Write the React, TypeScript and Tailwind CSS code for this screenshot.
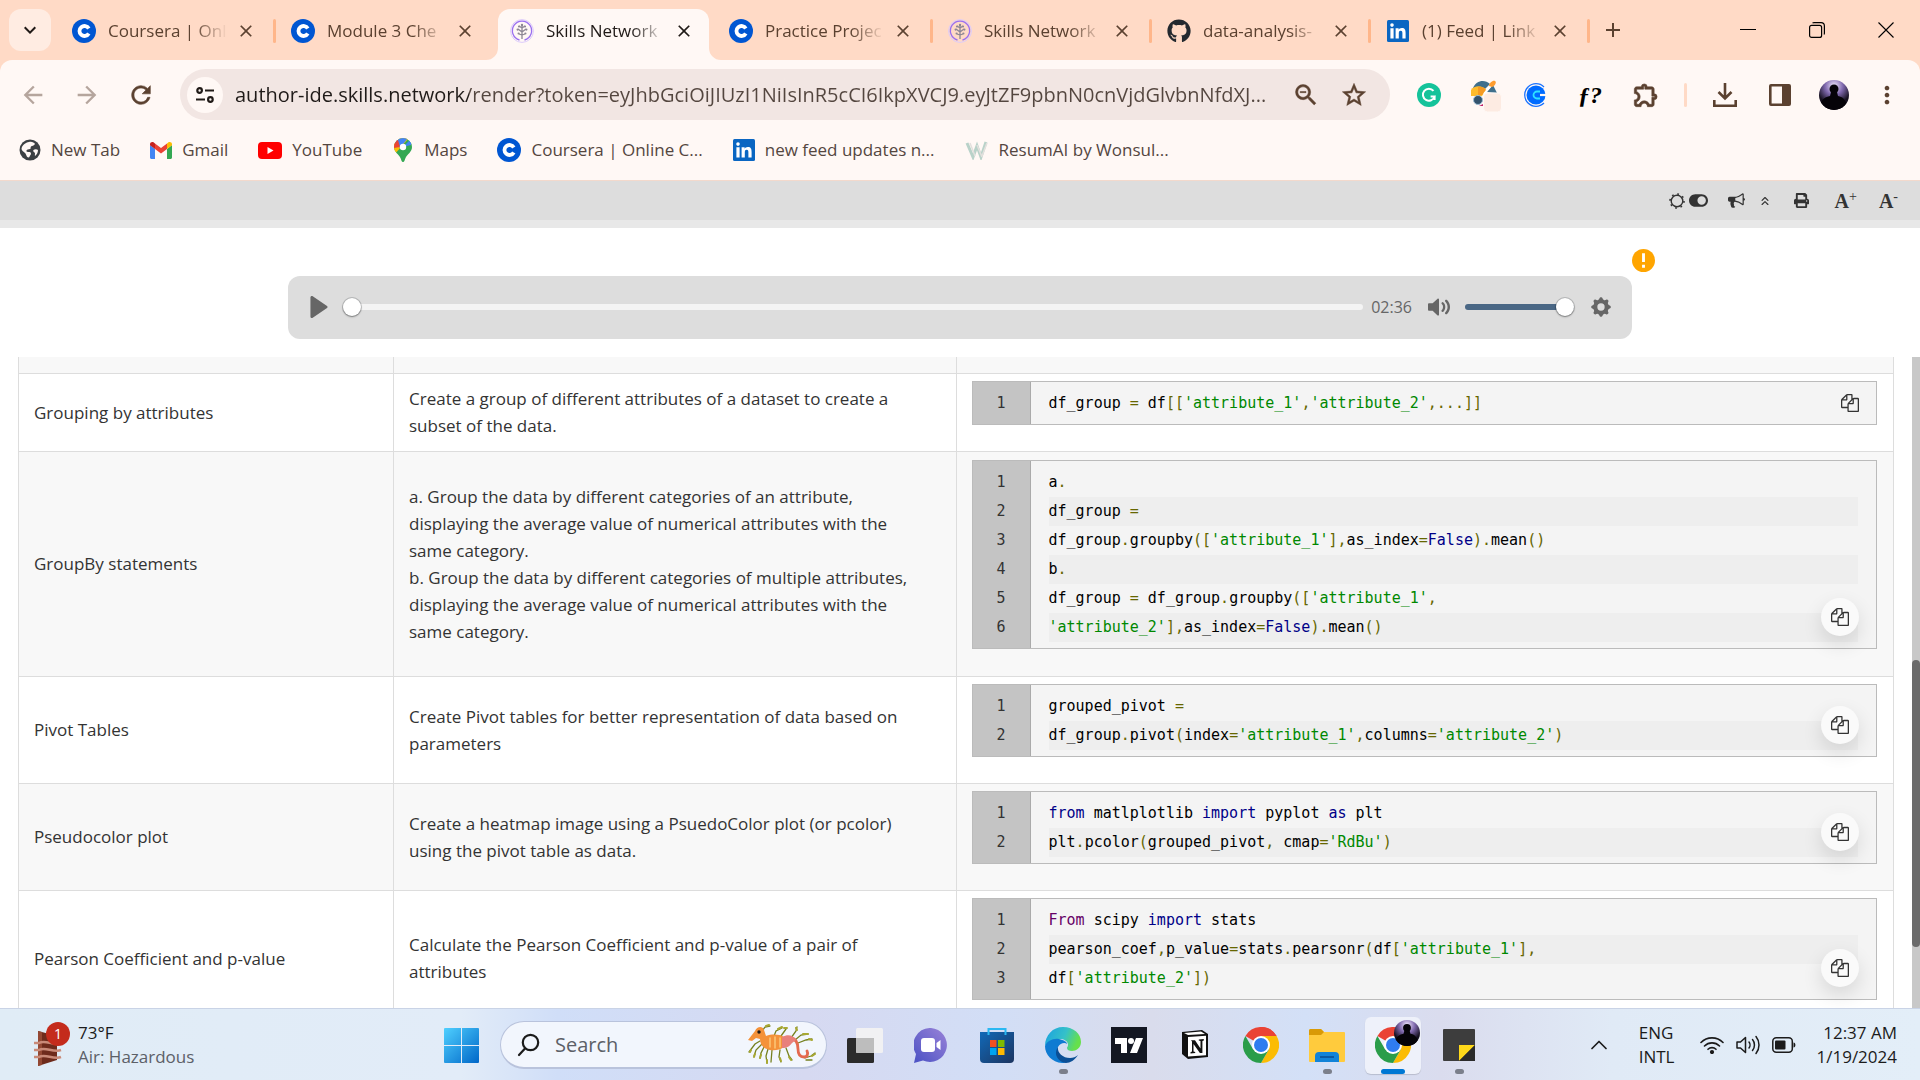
import React, { useState } from "react";
import {
  MdArrowBack,
  MdArrowForward,
  MdRefresh,
  MdStarBorder,
  MdOutlineExtension,
  MdZoomOut,
  MdMoreVert,
  MdKeyboardArrowDown,
  MdClose,
  MdAdd,
} from "react-icons/md";
import { FaGithub, FaPrint, FaToggleOn } from "react-icons/fa";
import { ChevronUp, ChevronsUp } from "lucide-react";

/* ---------- brand marks ---------- */

function CourseraMark() {
  return (
    <svg viewBox="0 0 24 24" className="size-6 shrink-0">
      <circle cx="12" cy="12" r="12" fill="#0056d2" />
      <path d="M16.800 9.500A5 5 0 1 0 16.800 14.500" fill="none" stroke="#fff" strokeWidth="3.800" />
    </svg>
  );
}

function SkillsMark() {
  return (
    <svg viewBox="0 0 24 24" className="size-6 shrink-0" fill="none">
      <circle cx="12" cy="12" r="11.400" stroke="#dccbfb" strokeWidth="1" />
      <path d="M9.500 21A9.600 9.600 0 1 1 14.500 21" stroke="#9a6ff0" strokeWidth="1.300" />
      <g stroke="#8d8794" strokeWidth="1.300">
        <path d="M12 20V5M12 9l-3-2M12 9l3-2M12 13l-4-3M12 13l4-3M12 16l-3-1M12 16l3-1" />
      </g>
      <g fill="#8d8794">
        <circle cx="12" cy="6" r="1.200" />
        <circle cx="9" cy="7.500" r="1.100" />
        <circle cx="15" cy="7.500" r="1.100" />
        <circle cx="7.600" cy="10.600" r="1.100" />
        <circle cx="16.400" cy="10.600" r="1.100" />
        <circle cx="8.600" cy="14.500" r="1.100" />
        <circle cx="15.400" cy="14.500" r="1.100" />
      </g>
    </svg>
  );
}

function LinkedInMark() {
  return (
    <svg viewBox="0 0 22 22" className="size-[22px] shrink-0">
      <rect width="22" height="22" rx="1.500" fill="#0a66c2" />
      <path d="M3.400 8.300h3.200v10.200H3.400zM8.600 8.300h3v1.400c.5-.9 1.600-1.700 3.200-1.700 3.200 0 3.800 2.100 3.800 4.900v5.600h-3.200v-5c0-1.200 0-2.700-1.700-2.700s-1.900 1.300-1.900 2.600v5.100H8.600z" fill="#fff" />
      <circle cx="5" cy="5.100" r="1.800" fill="#fff" />
    </svg>
  );
}

function GlobeMark() {
  return (
    <svg viewBox="0 0 22 22" className="size-[22px] shrink-0">
      <circle cx="11" cy="11" r="10.500" fill="#3c4043" />
      <path d="M10 3c3-.6 5 .6 6 2-1 2-3 1.500-4 2.500s.5 2-1 2.500-3 0-3.500 1.500 1.500 1.500 3 1.500 2 2 1 3-1 2.500-2 2.500c-2 0-2-3-3.500-4.500C4.500 12.500 3 12 2.500 10 3 6 6.500 3.500 10 3zM14.500 11c1-1 3.500-1 4.500 0 0 3-1.500 5-3 6-.5-1.500.5-2-.3-3.200S13.500 12.500 14.500 11z" fill="#fff8f5" />
    </svg>
  );
}

function GmailMark() {
  return (
    <svg viewBox="0 0 22 17" className="h-[17px] w-[22px] shrink-0">
      <path d="M0 3v12.500C0 16.300.7 17 1.500 17H5V7z" fill="#4285f4" />
      <path d="M22 3v12.500c0 .8-.7 1.500-1.500 1.500H17V7z" fill="#34a853" />
      <path d="M17 1.500V7l5-3.700V2.500c0-2.200-2.300-3-3.800-1.900z" fill="#fbbc04" />
      <path d="M5 7V1.500l6 4.500 6-4.500V7l-6 4.500z" fill="#ea4335" />
      <path d="M0 2.500v.8L5 7V1.500L3.800.6C2.300-.5 0 .3 0 2.500z" fill="#c5221f" />
    </svg>
  );
}

function YouTubeMark() {
  return (
    <svg viewBox="0 0 24 17" className="h-[17px] w-6 shrink-0">
      <rect width="24" height="17" rx="4" fill="#f00" />
      <path d="M9.500 5v7l6-3.500z" fill="#fff" />
    </svg>
  );
}

function MapsMark() {
  return (
    <svg viewBox="-2 0 22 24" className="h-6 w-[22px] shrink-0">
      <defs>
        <clipPath id="pin">
          <path d="M9 0a9 9 0 0 0-9 9c0 5 4.500 7 6.500 11 .9 1.800 1 4 2.500 4s1.600-2.200 2.500-4C13.500 16 18 14 18 9a9 9 0 0 0-9-9z" />
        </clipPath>
      </defs>
      <g clipPath="url(#pin)">
        <rect width="18" height="24" fill="#34a853" />
        <path d="M0 17 15 0H0z" fill="#fbbc04" />
        <path d="M0 4l6 6 8-10H0z" fill="#4285f4" />
        <path d="M0 3v7l6-1L4 2z" fill="#ea4335" />
        <path d="M9 9l8-8v6z" fill="#4285f4" />
        <circle cx="9" cy="9" r="3.200" fill="#fff" />
      </g>
    </svg>
  );
}

function ResumeMark() {
  return (
    <svg viewBox="0 0 24 20" className="h-5 w-6 shrink-0" fill="none">
      <path d="M2 3l6 14 4-11 4 11 5-15" stroke="#b9d2c9" strokeWidth="3" />
      <path d="M5 3l5 13M12 5l5 12M22 3l-5 13" stroke="#e3e0dd" strokeWidth="1.500" />
    </svg>
  );
}

function Avatar({ id, className }: { id: string; className: string }) {
  return (
    <svg viewBox="0 0 30 30" className={className}>
      <defs>
        <radialGradient id={id} cx="50%" cy="20%" r="60%">
          <stop offset="0" stopColor="#f3eaff" />
          <stop offset=".5" stopColor="#7f68ad" />
          <stop offset="1" stopColor="#15101f" />
        </radialGradient>
        <clipPath id={id + "c"}>
          <circle cx="15" cy="15" r="15" />
        </clipPath>
      </defs>
      <g clipPath={"url(#" + id + "c)"}>
        <rect width="30" height="30" fill={"url(#" + id + ")"} />
        <circle cx="15" cy="9" r="4.500" fill="#050308" />
        <path d="M12 12h6l1 4c5 1 6 3 8 6l3 9H0l2-9c2-3 4-5 9-6z" fill="#050308" />
      </g>
    </svg>
  );
}

/* ---------- browser chrome ---------- */

type Tab = { title: string; icon: React.ReactNode; active?: boolean; sep?: boolean };

const TABS: Tab[] = [
  { title: "Coursera | Onl", icon: <CourseraMark />, sep: true },
  { title: "Module 3 Che", icon: <CourseraMark /> },
  { title: "Skills Network", icon: <SkillsMark />, active: true },
  { title: "Practice Projec", icon: <CourseraMark />, sep: true },
  { title: "Skills Network", icon: <SkillsMark />, sep: true },
  { title: "data-analysis-", icon: <FaGithub className="size-6 shrink-0 text-[#24292f]" />, sep: true },
  { title: "(1) Feed | Link", icon: <LinkedInMark />, sep: true },
];

function TabStrip() {
  return (
    <header className="flex h-[60px] shrink-0 items-stretch bg-[#ffdac6] pl-[9px] text-[#5b4130]">
      <button aria-label="Search tabs" className="my-[9px] mr-2 flex size-[42px] items-center justify-center rounded-xl bg-[#ffece2] text-[#201a17]">
        <MdKeyboardArrowDown className="size-6" />
      </button>
      <nav className="flex min-w-0">
        {TABS.map((t, i) => (
          <div key={i} className="relative flex w-[219px] min-w-0 items-stretch">
            {t.active && (
              <>
                <div className="absolute top-[9px] right-[7px] bottom-0 left-px rounded-t-xl bg-[#fff8f5]" />
                <svg viewBox="0 0 12 12" className="absolute bottom-0 -left-[11px] size-3 text-[#fff8f5]" fill="currentColor"><path d="M12 0v12H0A12 12 0 0 0 12 0z" /></svg>
                <svg viewBox="0 0 12 12" className="absolute -right-[5px] bottom-0 size-3 text-[#fff8f5]" fill="currentColor"><path d="M0 0v12h12A12 12 0 0 1 0 0z" /></svg>
              </>
            )}
            <div className={"relative flex min-w-0 flex-1 items-center pt-0.5 pl-[13px] " + (t.active ? "text-[#201a17]" : "")}>
              <button className="flex min-w-0 shrink-0 items-center gap-3">
                <span className="flex w-6 shrink-0 justify-center">{t.icon}</span>
                <span className="w-[122px] text-left text-[17px] leading-6 whitespace-nowrap [mask-image:linear-gradient(90deg,#000_70%,transparent_98%)]">{t.title}</span>
              </button>
              <button aria-label="Close tab" className="ml-1 flex size-6 items-center justify-center">
                <MdClose className="size-5 shrink-0" />
              </button>
            </div>
            {t.sep && <div className="absolute top-[19px] right-0.5 h-6 w-[3px] rounded bg-[#ffb68a]" />}
          </div>
        ))}
      </nav>
      <button aria-label="New tab" className="ml-[5px] flex w-8 items-center justify-center"><MdAdd className="size-6" /></button>
      <div className="ml-auto flex text-black">
        <button aria-label="Minimize" className="flex w-[69px] items-center justify-center">
          <svg viewBox="0 0 16 16" className="size-4" fill="none" stroke="currentColor"><path d="M0 7.500h16" /></svg>
        </button>
        <button aria-label="Restore" className="flex w-[69px] items-center justify-center">
          <svg viewBox="0 0 16 16" className="size-4" fill="none" stroke="currentColor" strokeWidth="1.200"><rect x=".6" y="3.400" width="12" height="12" rx="2" /><path d="M3.500 1c.5-.3 1-.4 1.500-.4h7A3.400 3.400 0 0 1 15.400 4v7c0 .6-.1 1-.4 1.500" /></svg>
        </button>
        <button aria-label="Close" className="flex w-[69px] items-center justify-center">
          <svg viewBox="0 0 16 16" className="size-4" fill="none" stroke="currentColor" strokeWidth="1.100"><path d="M.5.5l15 15M15.500.5l-15 15" /></svg>
        </button>
      </div>
    </header>
  );
}

const URL_TEXT =
  "author-ide.skills.network/render?token=eyJhbGciOiJIUzI1NiIsInR5cCI6IkpXVCJ9.eyJtZF9pbnN0cnVjdGlvbnNfdXJ...";

const BOLD_ICON = "size-7 stroke-current [&>path[fill=none]]:hidden";

function Toolbar() {
  return (
    <div className="flex h-[69px] items-center rounded-t-xl bg-[#fff8f5] pr-[19px] pl-[19px] text-[#5b4130]">
      <button aria-label="Back" className="mr-[26px] text-[#b5a59d]"><MdArrowBack className="size-7" /></button>
      <button aria-label="Forward" className="mr-[26px] text-[#b5a59d]"><MdArrowForward className="size-7" /></button>
      <button aria-label="Reload" className="mr-[25px]"><MdRefresh className={BOLD_ICON} strokeWidth={0.5} /></button>
      <div className="flex h-[51px] min-w-0 flex-1 items-center rounded-full bg-[#f2e6e3] pr-[22px] pl-[7px]">
        <button aria-label="Site information" className="mr-3 flex size-9 shrink-0 items-center justify-center rounded-full bg-[#fff8f5]">
          <svg viewBox="0 0 18 18" className="size-[18px]" fill="none" stroke="#201a17" strokeWidth="2.200"><circle cx="3.600" cy="4.500" r="2.300" /><path d="M9 4.500h9M0 13.500h9" /><circle cx="14.400" cy="13.500" r="2.300" /></svg>
        </button>
        <input aria-label="Address" defaultValue={URL_TEXT} className="min-w-0 flex-1 bg-transparent bg-[linear-gradient(90deg,#1f1a18_234px,#54463f_234px)] bg-clip-text text-xl leading-8 text-transparent outline-none" />
        <button aria-label="Zoom" className="ml-2"><MdZoomOut className={BOLD_ICON} strokeWidth={0.4} /></button>
        <button aria-label="Bookmark" className="ml-5"><MdStarBorder className={BOLD_ICON} strokeWidth={0.4} /></button>
      </div>
      <div className="ml-[25px] flex items-center">
        <button aria-label="Grammar" className="w-[55px]">
          <svg viewBox="0 0 24 24" className="ml-0.5 size-6"><circle cx="12" cy="12" r="12" fill="#15c39a" /><path d="M16.500 7.800A6 6 0 1 0 17.600 13.500h-4M17.600 12.500v4.500" fill="none" stroke="#fff" strokeWidth="2" /></svg>
        </button>
        <button aria-label="Painter" className="w-[54px]">
          <svg viewBox="0 0 32 36" className="h-9 w-8">
            <path d="M3 11C6 3 15 2 20 7l-5 5z" fill="#3f6f8c" />
            <path d="M1 13c3-5 12-5 15 0l-4 6H1z" fill="#fdbb2d" />
            <path d="M8 10c3-1 6 0 8 3l-4 5H8z" fill="#f59a23" />
            <path d="M17 15l6-7 4 8z" fill="#3f6f8c" />
            <path d="M14 17l8-10" stroke="#fff" strokeWidth="2" />
            <path d="M19 9c0-3 4-6 6-5s0 5-3 6z" fill="#ff9d2f" />
            <circle cx="8" cy="23" r="4.500" fill="#33536d" stroke="#9dbcd3" />
            <path d="M9 29l4-2v2z" fill="#c2246b" />
            <rect x="13.500" y="16" width="18" height="19" rx="4" fill="#fdebe2" stroke="#fff8f5" />
          </svg>
        </button>
        <button aria-label="Clockify" className="w-[54px]">
          <svg viewBox="0 0 24 24" className="size-6" fill="none"><circle cx="12" cy="12" r="9.500" fill="#006bff" /><path d="M20 4A11.300 11.300 0 1 0 20 20" stroke="#1a73ff" strokeWidth="1.300" /><path d="M16 8.500h-3a3.500 3.500 0 0 0 0 7h3" stroke="#2de3ff" strokeWidth="1.800" /><path d="M16 12h8" stroke="#fff8f5" strokeWidth="2.200" /></svg>
        </button>
        <button aria-label="Font finder" className="w-[54px] text-left font-['Liberation_Serif'] text-2xl leading-7 font-bold text-black italic">ƒ?</button>
        <button aria-label="Extensions" className="w-[52px]"><MdOutlineExtension className={BOLD_ICON} strokeWidth={0.5} /></button>
        <div className="mr-[26px] h-6 w-[3px] rounded bg-[#ffdac6]" />
        <button aria-label="Downloads" className="w-14">
          <svg viewBox="0 0 24 24" className="size-6" fill="none" stroke="currentColor" strokeWidth="2.600"><path d="M12 0v15M5.500 9l6.500 6.500L18.500 9M1.300 17v5.700h21.400V17" /></svg>
        </button>
        <button aria-label="Side panel" className="w-[50px]">
          <svg viewBox="0 0 22 22" className="size-[22px]"><path fillRule="evenodd" d="M2 0h18a2 2 0 0 1 2 2v18a2 2 0 0 1-2 2H2a2 2 0 0 1-2-2V2a2 2 0 0 1 2-2zm.600 2.600v16.800H13V2.600z" fill="currentColor" /></svg>
        </button>
        <button aria-label="Profile"><Avatar id="p1" className="size-[30px]" /></button>
        <button aria-label="Menu" className="ml-6"><MdMoreVert className="size-7" /></button>
      </div>
    </div>
  );
}

function Bookmark({ icon, label }: { icon: React.ReactNode; label: string }) {
  return (
    <a href="#" className="flex items-center gap-2.5 text-[17px] leading-6 whitespace-nowrap text-[#54463f]">
      {icon}
      {label}
    </a>
  );
}

/* ---------- page content ---------- */

type Tok = [string, string?];
const K = "text-[#000088]";
const S = "text-[#008800]";
const P = "text-[#666600]";
const T = "text-[#660066]";

type Row = { name: string; desc: string[]; tall?: boolean; code: Tok[][] };

const ROWS: Row[] = [
  {
    name: "Grouping by attributes",
    desc: ["Create a group of different attributes of a dataset to create a subset of the data."],
    code: [[["df_group "], ["=", P], [" df"], ["[[", P], ["'attribute_1'", S], [",", P], ["'attribute_2'", S], [",...]]", P]]],
  },
  {
    name: "GroupBy statements",
    tall: true,
    desc: [
      "a. Group the data by different categories of an attribute, displaying the average value of numerical attributes with the same category.",
      "b. Group the data by different categories of multiple attributes, displaying the average value of numerical attributes with the same category.",
    ],
    code: [
      [["a"], [".", P]],
      [["df_group "], ["=", P]],
      [["df_group"], [".", P], ["groupby"], ["([", P], ["'attribute_1'", S], ["],", P], ["as_index"], ["=", P], ["False", K], [").", P], ["mean"], ["()", P]],
      [["b"], [".", P]],
      [["df_group "], ["=", P], [" df_group"], [".", P], ["groupby"], ["([", P], ["'attribute_1'", S], [",", P]],
      [["'attribute_2'", S], ["],", P], ["as_index"], ["=", P], ["False", K], [").", P], ["mean"], ["()", P]],
    ],
  },
  {
    name: "Pivot Tables",
    desc: ["Create Pivot tables for better representation of data based on parameters"],
    code: [
      [["grouped_pivot "], ["=", P]],
      [["df_group"], [".", P], ["pivot"], ["(", P], ["index"], ["=", P], ["'attribute_1'", S], [",", P], ["columns"], ["=", P], ["'attribute_2'", S], [")", P]],
    ],
  },
  {
    name: "Pseudocolor plot",
    desc: ["Create a heatmap image using a PsuedoColor plot (or pcolor) using the pivot table as data."],
    code: [
      [["from", K], [" matlplotlib "], ["import", K], [" pyplot "], ["as", K], [" plt"]],
      [["plt"], [".", P], ["pcolor"], ["(", P], ["grouped_pivot"], [",", P], [" cmap"], ["=", P], ["'RdBu'", S], [")", P]],
    ],
  },
  {
    name: "Pearson Coefficient and p-value",
    desc: ["Calculate the Pearson Coefficient and p-value of a pair of attributes"],
    code: [
      [["From", T], [" scipy "], ["import", K], [" stats"]],
      [["pearson_coef"], [",", P], ["p_value"], ["=", P], ["stats"], [".", P], ["pearsonr"], ["(", P], ["df"], ["[", P], ["'attribute_1'", S], ["],", P]],
      [["df"], ["[", P], ["'attribute_2'", S], ["])", P]],
    ],
  },
];

function CopyIcon() {
  return (
    <svg viewBox="0 0 1792 1792" className="size-[18px]" fill="currentColor">
      <path d="M1696 384q40 0 68 28t28 68v1216q0 40-28 68t-68 28h-960q-40 0-68-28t-28-68v-288h-544q-40 0-68-28t-28-68v-672q0-40 20-88t48-76l408-408q28-28 76-48t88-20h416q40 0 68 28t28 68v328q68-40 128-40h416zm-544 213l-299 299h299v-299zm-640-384l-299 299h299v-299zm196 647l316-316v-416h-384v416q0 40-28 68t-68 28h-416v640h512v-256q0-40 20-88t48-76zm956 804v-1152h-384v416q0 40-28 68t-68 28h-416v640h896z" />
    </svg>
  );
}

function CodeBox({ code }: { code: Tok[][] }) {
  const single = code.length === 1;
  return (
    <div className="relative flex border border-[#bbb] bg-[#f4f4f4] font-['DejaVu_Sans_Mono',monospace] text-[15px] leading-[29px] text-black">
      <ol className="w-[58px] shrink-0 border-r border-[#aaa] bg-[#c4c4c4] pt-[7px] pb-1.5 text-center text-[#333]">
        {code.map((_, i) => (
          <li key={i}>{i + 1}</li>
        ))}
      </ol>
      <div className="min-w-0 flex-1 px-[18px] pt-[7px] pb-1.5">
        {code.map((line, i) => (
          <div key={i} className="whitespace-pre even:bg-[#eee]">
            {line.map(([t, c], j) => (
              <span key={j} className={c}>{t}</span>
            ))}
          </div>
        ))}
      </div>
      {single ? (
        <button aria-label="Copy code" className="absolute top-2.5 right-[15px] p-0.5 text-[#333]"><CopyIcon /></button>
      ) : (
        <button aria-label="Copy code" className="absolute right-[17px] bottom-3 flex size-[38px] items-center justify-center rounded-full bg-[#fafafa] text-[#333] shadow-[0_8px_20px_rgba(0,0,0,0.12)]">
          <CopyIcon />
        </button>
      )}
    </div>
  );
}

const RANGE =
  "h-[18px] appearance-none bg-transparent [&::-webkit-slider-runnable-track]:h-1.5 [&::-webkit-slider-runnable-track]:rounded-full [&::-webkit-slider-thumb]:-mt-1.5 [&::-webkit-slider-thumb]:size-[18px] [&::-webkit-slider-thumb]:appearance-none [&::-webkit-slider-thumb]:rounded-full [&::-webkit-slider-thumb]:bg-white [&::-webkit-slider-thumb]:shadow-[0_1px_2px_rgba(0,0,0,0.35),0_0_0_1px_rgba(35,40,47,0.2)]";

function Player() {
  const [pos, setPos] = useState(0);
  const [vol, setVol] = useState(100);
  return (
    <div className="mx-auto flex h-[63px] w-[70%] items-center rounded-xl bg-[#ddd] pr-5 pb-px pl-5 text-[#666]">
      <button aria-label="Play" className="mr-[13px]">
        <svg viewBox="0 0 18 18" className="size-[22px]" fill="currentColor"><path d="M15.562 8.100L3.870.225c-.818-.562-1.870 0-1.870.9v15.750c0 .9 1.052 1.462 1.870.9L15.563 9.900c.584-.450.584-1.350 0-1.800z" /></svg>
      </button>
      <input type="range" aria-label="Seek" value={pos} onChange={(e) => setPos(+e.target.value)} className={RANGE + " min-w-0 flex-1 [&::-webkit-slider-runnable-track]:bg-[#f4f4f4]"} />
      <span className="ml-2 text-base leading-6">02:36</span>
      <button aria-label="Mute" className="ml-4">
        <svg viewBox="0 0 18 18" className="size-[22px]" fill="currentColor">
          <path d="M15.600 3.300c-.4-.4-1-.4-1.400 0-.4.4-.4 1 0 1.400C15.400 5.900 16 7.400 16 9c0 1.600-.6 3.100-1.800 4.300-.4.4-.4 1 0 1.400.2.2.5.3.7.3.3 0 .5-.1.7-.3C17.100 13.200 18 11.200 18 9s-.9-4.200-2.400-5.700z" />
          <path d="M11.282 5.282a.909.909 0 000 1.316c.735.735.995 1.458.995 2.402 0 .936-.425 1.917-.995 2.487a.909.909 0 000 1.316c.145.145.636.262 1.018.156a.725.725 0 00.298-.156C13.773 11.733 14.130 10.160 14.130 9c0-.17-.002-.34-.011-.51-.053-.992-.319-2.005-1.522-3.208a.909.909 0 00-1.316 0zM3.786 6.008H.714C.286 6.008 0 6.310 0 6.760v4.512c0 .452.286.752.714.752h3.072l4.071 3.858c.5.3 1.143 0 1.143-.602V2.752c0-.601-.643-.977-1.143-.601L3.786 6.008z" />
        </svg>
      </button>
      <input type="range" aria-label="Volume" value={vol} onChange={(e) => setVol(+e.target.value)} className={RANGE + " ml-[15px] w-[109px] [&::-webkit-slider-runnable-track]:bg-[#4a6785]"} />
      <button aria-label="Settings" className="ml-4">
        <svg viewBox="0 0 18 18" className="size-[22px]" fill="currentColor"><path d="M16.135 7.784a2 2 0 01-1.230-2.969c.322-.536.225-.998-.094-1.316l-.31-.31c-.318-.318-.78-.415-1.316-.094a2 2 0 01-2.969-1.230C10.065 1.258 9.669 1 9.219 1h-.438c-.45 0-.845.258-.997.865a2 2 0 01-2.969 1.230c-.536-.322-.999-.225-1.317.093l-.31.31c-.318.318-.415.781-.093 1.317a2 2 0 01-1.230 2.969C1.260 7.935 1 8.330 1 8.781v.438c0 .45.258.845.865.997a2 2 0 011.230 2.969c-.322.536-.225.998.094 1.316l.31.31c.319.319.782.415 1.316.094a2 2 0 012.969 1.230c.151.607.547.865.997.865h.438c.45 0 .845-.258.997-.865a2 2 0 012.969-1.230c.535.321.997.225 1.316-.094l.31-.31c.318-.318.415-.781.094-1.316a2 2 0 011.230-2.969c.607-.151.865-.547.865-.997v-.438c0-.451-.26-.846-.865-.997zM9 12a3 3 0 110-6 3 3 0 010 6z" /></svg>
      </button>
    </div>
  );
}

function PageBar() {
  const sizeButton = "flex items-start font-['Liberation_Serif',serif] text-xl leading-5 font-bold";
  return (
    <div className="flex h-10 shrink-0 items-center justify-end border-t border-[#f3d9cc] bg-[#ddd] pr-[22px] text-[#333]">
      <button aria-label="Toggle theme" className="mr-5 flex items-center gap-1">
        <svg viewBox="0 0 16 16" className="size-4" fill="none" stroke="currentColor" strokeWidth="1.400"><circle cx="8" cy="8" r="5.800" /><circle cx="8" cy="8" r="7" strokeDasharray="1.800 3.700" strokeWidth="1.600" /></svg>
        <FaToggleOn className="size-[19px]" />
      </button>
      <button aria-label="Announcements" className="mr-[13px]">
        <svg viewBox="0 0 1792 1792" className="size-[17px]" fill="currentColor"><path d="M1664 640q53 0 90.500 37.500t37.500 90.500-37.500 90.500-90.500 37.500v384q0 52-38 90t-90 38q-417-347-812-380-58 19-91 66t-31 100.500 40 92.500q-20 33-23 65.500t6 58 33.500 55 48 50 61.500 50.500q-29 58-111.500 83t-168.500 11.500-132-55.500q-7-23-29.500-87.500t-32-94.500-23-89-15-101 3.500-98.500 22-110.500h-122q-66 0-113-47t-47-113v-192q0-66 47-113t113-47h480q435 0 896-384 52 0 90 38t38 90v384zm-128 604v-954q-394 302-768 343v270q377 42 768 341z" /></svg>
      </button>
      <button aria-label="Collapse" className="mr-[22px]"><ChevronsUp className="size-3.5" /></button>
      <button aria-label="Print" className="mr-[26px]"><FaPrint className="size-[15px]" /></button>
      <button aria-label="Increase font" className={sizeButton + " mr-[22px]"}>A<span className="text-sm leading-3 font-normal">+</span></button>
      <button aria-label="Decrease font" className={sizeButton}>A<span className="text-sm leading-3 font-normal">-</span></button>
    </div>
  );
}

function Content() {
  const cell = "border border-[#ddd] pl-[15px]";
  return (
    <main className="flex min-h-0 flex-1 flex-col bg-white">
      <div className="h-2 shrink-0 bg-[#e8e8e8]" />
      <div className="relative shrink-0 pt-12 pb-[18px]">
        <Player />
        <svg viewBox="0 0 24 24" className="absolute top-[21px] left-[85%] size-[23px]"><circle cx="12" cy="12" r="12" fill="#ffa500" /><path d="M12 4.500v9M12 16.500v3" stroke="#fff" strokeWidth="3" /></svg>
      </div>
      <div className="flex min-h-0 flex-1">
        <div className="min-w-0 flex-1 overflow-hidden px-[18px]">
          <table className="w-full table-fixed border-collapse text-[17px] leading-[27px] text-[#333]">
            <colgroup>
              <col className="w-[20%]" />
              <col className="w-[30%]" />
              <col className="w-[50%]" />
            </colgroup>
            <tbody>
              <tr className="h-4 bg-[#f8f8f8]">
                <td className="border-x border-[#ddd]" />
                <td className="border-x border-[#ddd]" />
                <td className="border-x border-[#ddd]" />
              </tr>
              {ROWS.map((r) => (
                <tr key={r.name} className={"odd:bg-[#f8f8f8] even:bg-white " + (r.tall ? "h-[225px]" : "")}>
                  <td className={cell + " pr-[15px]"}>{r.name}</td>
                  <td className={cell + " pr-[25px]"}>
                    {r.desc.map((d) => (
                      <p key={d}>{d}</p>
                    ))}
                  </td>
                  <td className={cell + " pt-[7px] pr-4 pb-[26px]"}>
                    <CodeBox code={r.code} />
                  </td>
                </tr>
              ))}
            </tbody>
          </table>
        </div>
        <div className="flex w-2 shrink-0 flex-col bg-[#c8c8c8]">
          <div className="mt-[303px] h-[287px] rounded bg-[#6b6b6b]" />
        </div>
      </div>
    </main>
  );
}

/* ---------- taskbar ---------- */

function AppButton({ label, children, running, active }: { label: string; children: React.ReactNode; running?: boolean; active?: boolean }) {
  return (
    <button aria-label={label} className={"relative mx-[5px] flex h-[57px] w-14 items-center justify-center rounded-md " + (active ? "bg-[#eef1fa] shadow-[0_1px_1px_rgba(0,0,0,0.15)]" : "")}>
      {children}
      {running && <span className="absolute bottom-0 h-[5px] w-[9px] rounded-full bg-[#7b7f8b]" />}
      {active && <span className="absolute bottom-0 h-[5px] w-6 rounded-full bg-[#0078d4]" />}
    </button>
  );
}

function ChromeMark() {
  return (
    <svg viewBox="0 0 36 36" className="size-9">
      <path d="M18 18 2.400 9A18 18 0 0 1 33.600 9z" fill="#ea4335" />
      <path d="M18 0a18 18 0 0 1 15.600 9H18z" fill="#ea4335" />
      <path d="M18 9h15.600A18 18 0 0 1 18 36l7.800-13.500z" fill="#fbbc04" />
      <path d="M2.400 9A18 18 0 0 0 18 36l7.800-13.500L10.200 22.500z" fill="#2a9d4a" />
      <circle cx="18" cy="18" r="9" fill="#fff" />
      <circle cx="18" cy="18" r="7" fill="#2f7cf0" />
    </svg>
  );
}

function SeaDragon() {
  return (
    <svg viewBox="0 0 70 42" className="h-[42px] w-[70px]" fill="none" strokeLinecap="round">
      <g stroke="#75801f" strokeWidth="1.300">
        <path d="M14 7l3-4 5-1M26 12l2-5 6-3M33 12l5-7M43 14l5-7 1-4M47 16l6-5 7-1M50 19l8-3 6-1" />
        <path d="M12 17L7 20l-6 8M14 20l-6 6-2 6M16 23l-3 6-1 5M20 25l-2 7 1 7M24 26l-1 12M32 26l-1 7 2 5M38 24l3 8 3 4M57 34l6-2 4-3M58 36l6 0" />
      </g>
      <g stroke="#a8a832" strokeWidth="2">
        <path d="M18 2l3-1M30 5l4-2M36 4l3 0M48 4l1 2M55 10l5 0M61 15l3 1M3 26l-1 2M7 30l-1 3M13 31l-1 3M19 36l0 3M32 34l1 3M41 33l2 3M64 32l3-2" />
      </g>
      <path d="M43 14c6 1 7 6 7 11s2 8 6 8 4-4 3-6" stroke="#e4694f" strokeWidth="2.800" />
      <path d="M0 16L7 7c2-5 8-5 9-1l2 6c6-2 13-2 18 1l0 10c-5 4-13 4-17 2-4-1-7-5-7-10l-4-1-4 3z" fill="#f4923a" />
      <path d="M34 13c6-3 11-2 14 3l-4 3c-2 3-5 5-10 5z" fill="#e8807c" />
      <path d="M22 14v9M27 13v11M32 14v9" stroke="#fbc878" strokeWidth="1.500" />
      <circle cx="11" cy="8" r="1.700" fill="#1d1a18" />
    </svg>
  );
}

function Taskbar() {
  return (
    <footer className="grid h-[72px] shrink-0 grid-cols-[431px_1fr_auto] items-center border-t border-[#c9d3e6] bg-[linear-gradient(90deg,#e0ecf6_0%,#e2ecf8_24%,#d0def8_29%,#d6d9f1_42%,#d2def6_52%,#d9dcec_60%,#d3e0f7_68%,#dadcee_75%,#e0eaf6_84%,#e3eef8_100%)] pt-px text-[#1b1b1b]">
      <button className="flex items-center gap-3 pl-[33px] text-left">
        <span className="relative h-11 w-[33px]">
          <svg viewBox="0 0 33 44" className="h-11 w-[33px]">
            <path d="M5 8l19 5v24L5 43z" fill="#6e2b1c" />
            <path d="M5 8l4 1v33l-4 1z" fill="#934833" />
            <g fill="none" stroke="#c98a78" strokeWidth="2.500"><path d="M1 20h5c6-4 14 3 22 0M1 27h5c6-4 14 3 22 0M1 34h5c6-4 14 3 22 0" /></g>
          </svg>
          <span className="absolute -top-px -right-1 flex size-6 items-center justify-center rounded-full bg-[#c42b1c] text-sm text-white">1</span>
        </span>
        <span className="text-[17px] leading-6">
          73°F
          <br />
          <span className="text-[#5c6067]">Air: Hazardous</span>
        </span>
      </button>
      <div className="flex items-center">
        <button aria-label="Start" className="mr-[21px] flex w-12 justify-end">
          <svg viewBox="0 0 35 35" className="size-[35px]"><defs><linearGradient id="win" x1="0" y1="0" x2="1" y2="1"><stop offset="0" stopColor="#4fd0ff" /><stop offset="1" stopColor="#0067c8" /></linearGradient></defs><path d="M1 0h16v17H0V1a1 1 0 0 1 1-1zM18 0h16a1 1 0 0 1 1 1v16H18zM0 18h17v17H1a1 1 0 0 1-1-1zM18 18h17v16a1 1 0 0 1-1 1H18z" fill="url(#win)" /></svg>
        </button>
        <label className="mr-[5px] flex h-12 w-[327px] items-center rounded-full border border-b-2 border-[#b9c3dc] bg-[#f2f6fd] pr-2 pl-4">
          <svg viewBox="0 0 24 24" className="size-6 shrink-0" fill="none" stroke="#1b1b1b" strokeWidth="2.200" strokeLinecap="round"><circle cx="13.500" cy="9.500" r="7.700" /><path d="M8 15.500l-6 6.500" /></svg>
          <input type="text" placeholder="Search" className="ml-3.5 min-w-0 flex-1 bg-transparent text-xl leading-7 outline-none placeholder:text-[#5c6067]" />
          <SeaDragon />
        </label>
        <AppButton label="Task view">
          <svg viewBox="0 0 36 35" className="h-[35px] w-9"><rect x="0" y="10" width="27" height="25" rx="1.500" fill="#2b2b2b" /><rect x="9" y="0" width="27" height="25" rx="1.500" fill="#f2f2f2" fillOpacity=".95" /><path d="M9 10h18v15H10.500A1.500 1.500 0 0 1 9 23.500z" fill="#bdbdbd" /></svg>
        </AppButton>
        <AppButton label="Chat">
          <svg viewBox="0 0 34 35" className="h-[35px] w-[34px]"><defs><linearGradient id="chat" x1="1" y1="0" x2="0" y2="1"><stop offset="0" stopColor="#9a83d8" /><stop offset="1" stopColor="#4a51c4" /></linearGradient></defs><path d="M17 0a17 17 0 1 1-8 32.500L0 35l2-9A17 17 0 0 1 17 0z" fill="url(#chat)" /><rect x="7" y="10" width="14" height="14" rx="3" fill="#fff" /><path d="M22.500 15l4-3v10l-4-3z" fill="#fff" /></svg>
        </AppButton>
        <AppButton label="Store">
          <svg viewBox="0 0 34 35" className="h-[35px] w-[34px]"><defs><linearGradient id="store" x1="0" y1="0" x2="1" y2="1"><stop offset="0" stopColor="#1169b8" /><stop offset="1" stopColor="#1c3560" /></linearGradient></defs><path d="M0 4h34v27a4 4 0 0 1-4 4H4a4 4 0 0 1-4-4z" fill="url(#store)" /><path d="M8.500 7V1h17v6" fill="none" stroke="#2bb8f2" strokeWidth="2" /><path d="M10 12h6.500v7H10z" fill="#f25022" /><path d="M18 12h6.500v7H18z" fill="#7fba00" /><path d="M10 20h6.500v7H10z" fill="#00a4ef" /><path d="M18 20h6.500v7H18z" fill="#ffb900" /></svg>
        </AppButton>
        <AppButton label="Edge" running>
          <svg viewBox="0 0 36 36" className="size-9"><defs><linearGradient id="e1" x1="0" y1="0" x2="1" y2=".3"><stop offset="0" stopColor="#1aa0e0" /><stop offset=".6" stopColor="#35c1c9" /><stop offset="1" stopColor="#66e04b" /></linearGradient></defs><path d="M18 0c11 0 18 7 18 15 0 6-5 9-9 9-3 0-5-1-5-3 0-1 1.500-2 1-4-.6-3-4-5-8-5C8 12 2 16 0 19 0 8 8 0 18 0z" fill="url(#e1)" /><path d="M0 19c2-5 8-8 14-7 5 1 8 3 8 5-2-2-7-1-9 3-3 6 1 13 8 16C9 37 0 29 0 19z" fill="#0f7bd2" /><path d="M13 20c-1 6 5 11 12 11 3 0 6-1 8-3-3 5-8 8-12 8-8-1-13-9-8-16z" fill="#0b4f96" /></svg>
        </AppButton>
        <AppButton label="TradingView">
          <svg viewBox="0 0 36 36" className="size-9"><rect width="36" height="36" fill="#131722" /><path d="M4 11h12v15h-6v-9H4zM25 11h7l-6 15h-7z" fill="#fff" /><circle cx="20" cy="14" r="3" fill="#fff" /></svg>
        </AppButton>
        <AppButton label="Notion">
          <svg viewBox="0 0 30 31" className="h-[31px] w-[30px]"><path d="M2 2l20-2 6 4v23L8 29l-6-5z" fill="#111" /><path d="M4 3l17-1.500L25 4 8 5z" fill="#fff" /><path d="M8 7l18-1.300v19.500L8 26.500z" fill="#fff" /><path d="M11 10.200h4l5.500 8.300V11l-1.700-.5V9.400l5-.3v1.300l-1.400.5v12h-2.500l-6.400-9v7.600l1.700.5v1.100l-4.700.4v-1.300l1.500-.6V11.600z" fill="#111" /></svg>
        </AppButton>
        <AppButton label="Chrome"><ChromeMark /></AppButton>
        <AppButton label="File Explorer" running>
          <svg viewBox="0 0 36 33" className="h-[33px] w-9"><path d="M0 1.500A1.500 1.500 0 0 1 1.500 0H12l3 3h20a1 1 0 0 1 1 1v28a1 1 0 0 1-1 1H1a1 1 0 0 1-1-1z" fill="#ffcb3d" /><path d="M0 1.500A1.500 1.500 0 0 1 1.500 0H12l3 3-3 3H0z" fill="#d99a06" /><path d="M6 33v-6a4 4 0 0 1 4-4h16a4 4 0 0 1 4 4v6z" fill="#1283d8" /><path d="M11 28h14" stroke="#0a4f96" strokeWidth="1.600" /></svg>
        </AppButton>
        <AppButton label="Chrome window" active>
          <ChromeMark />
          <Avatar id="p2" className="absolute top-[3px] right-px size-[26px]" />
        </AppButton>
        <AppButton label="Sticky Notes" running>
          <svg viewBox="0 0 32 32" className="size-8"><rect width="32" height="32" rx="1" fill="#3d3d3d" /><path d="M16 16h16L16 32z" fill="#ffd91a" /><path d="M32 16v16H16z" fill="#2b2b2b" /></svg>
        </AppButton>
      </div>
      <div className="flex items-center pr-[23px] text-[17px] leading-6">
        <button aria-label="Show hidden icons" className="mr-[26px]"><ChevronUp className="size-7" strokeWidth={1.500} /></button>
        <button className="mr-[26px] text-left">ENG<br />INTL</button>
        <button aria-label="Network, sound and battery" className="mr-5 flex items-center gap-3">
          <svg viewBox="0 0 24 18" className="h-[18px] w-6" fill="none" stroke="currentColor" strokeWidth="1.600" strokeLinecap="round"><path d="M1 6.500a15.500 15.500 0 0 1 22 0M4.500 10a10.600 10.600 0 0 1 15 0M8 13.300a5.700 5.700 0 0 1 8 0" /><circle cx="12" cy="16" r="1.300" fill="currentColor" /></svg>
          <svg viewBox="0 0 24 20" className="h-5 w-6" fill="none" stroke="currentColor" strokeWidth="1.500" strokeLinecap="round" strokeLinejoin="round"><path d="M1 7v6h3.500l5 4.500v-15L4.500 7zM13 7c1.300 1.600 1.300 4.400 0 6M16.500 4.500c2.600 3 2.600 8 0 11M20 1.500c4 5 4 12 0 17" /></svg>
          <svg viewBox="0 0 24 16" className="h-4 w-6" fill="none"><rect x=".8" y=".8" width="19.500" height="14.400" rx="3.500" stroke="currentColor" strokeWidth="1.500" /><rect x="3" y="3.500" width="10.500" height="9" rx="1" fill="currentColor" /><path d="M21.500 5.500c2.500 0 2.500 5 0 5z" fill="currentColor" /></svg>
        </button>
        <button className="text-right">12:37 AM<br />1/19/2024</button>
      </div>
    </footer>
  );
}

export default function App() {
  return (
    <div className="flex h-screen flex-col overflow-hidden bg-[#ffdac6] font-['Open_Sans','Noto_Sans',sans-serif]">
      <TabStrip />
      <Toolbar />
      <nav className="flex h-[51px] shrink-0 items-center bg-[#fff8f5] pb-[9px] pl-[19px]">
        <div className="flex items-center gap-[30px]">
          <Bookmark icon={<GlobeMark />} label="New Tab" />
          <Bookmark icon={<GmailMark />} label="Gmail" />
          <Bookmark icon={<YouTubeMark />} label="YouTube" />
          <Bookmark icon={<MapsMark />} label="Maps" />
          <Bookmark icon={<CourseraMark />} label="Coursera | Online C..." />
          <Bookmark icon={<LinkedInMark />} label="new feed updates n..." />
          <Bookmark icon={<ResumeMark />} label="ResumAI by Wonsul..." />
        </div>
      </nav>
      <PageBar />
      <Content />
      <Taskbar />
    </div>
  );
}
